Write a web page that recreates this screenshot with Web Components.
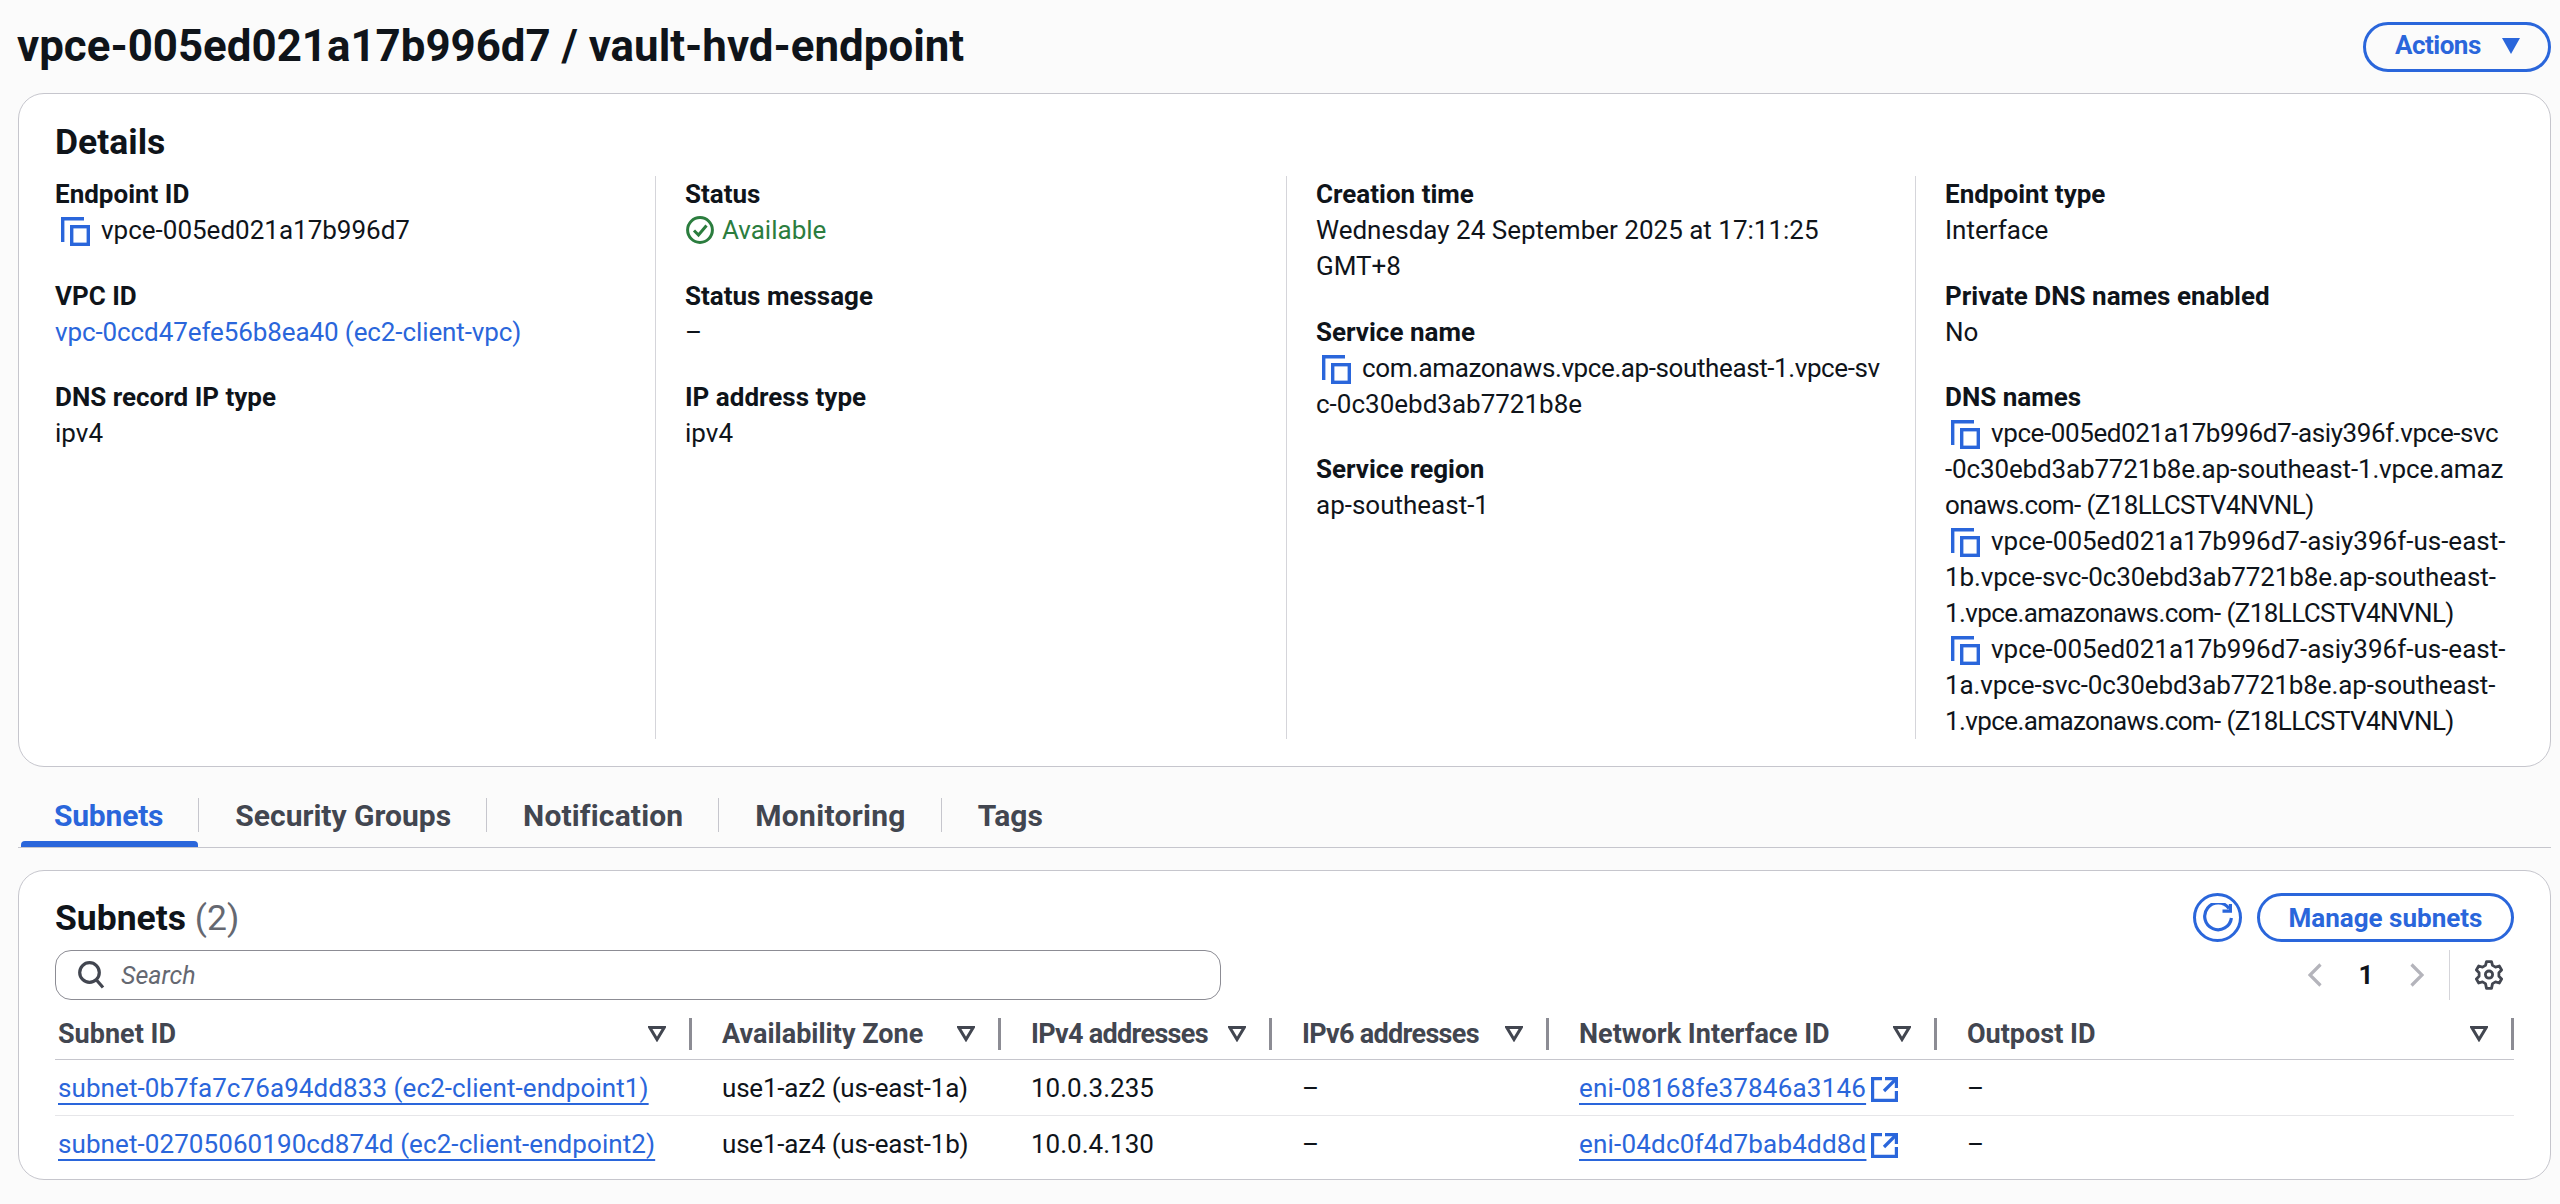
<!DOCTYPE html>
<html lang="en"><head><meta charset="utf-8"><title>vpce</title>
<style>
html,body{margin:0;padding:0;background:#fbfbfb}
body{width:2560px;height:1204px;overflow:hidden;font-family:Roboto,"Liberation Sans",sans-serif;font-size:26px;line-height:36px;color:#0f141a}
</style></head><body>
<vpc-page>
  <page-header>
    <span slot="title">vpce-005ed021a17b996d7 / vault-hvd-endpoint</span>
    <aws-btn slot="actions" caret style="--w:188px">Actions</aws-btn>
  </page-header>
  <aws-card style="--pb:27px;--pt:26px">
    <card-heading>Details</card-heading>
    <detail-grid>
      <detail-col>
        <kv-pair label="Endpoint ID"><aws-icon name="copy"></aws-icon>vpce-005ed021a17b996d7</kv-pair>
        <kv-pair label="VPC ID"><aws-link plain style="letter-spacing:-.1px">vpc-0ccd47efe56b8ea40 (ec2-client-vpc)</aws-link></kv-pair>
        <kv-pair label="DNS record IP type">ipv4</kv-pair>
      </detail-col>
      <detail-col>
        <kv-pair label="Status"><status-ok>Available</status-ok></kv-pair>
        <kv-pair label="Status message">–</kv-pair>
        <kv-pair label="IP address type">ipv4</kv-pair>
      </detail-col>
      <detail-col>
        <kv-pair label="Creation time">Wednesday 24 September 2025 at 17:11:25<br>GMT+8</kv-pair>
        <kv-pair label="Service name"><aws-icon name="copy"></aws-icon><span style="letter-spacing:-.4px">com.amazonaws.vpce.ap-southeast-1.vpce-sv</span><br>c-0c30ebd3ab7721b8e</kv-pair>
        <kv-pair label="Service region">ap-southeast-1</kv-pair>
      </detail-col>
      <detail-col>
        <kv-pair label="Endpoint type">Interface</kv-pair>
        <kv-pair label="Private DNS names enabled">No</kv-pair>
        <kv-pair label="DNS names"><aws-icon name="copy"></aws-icon><span style="letter-spacing:-.4px">vpce-005ed021a17b996d7-asiy396f.vpce-svc</span><br><span style="letter-spacing:-.15px">-0c30ebd3ab7721b8e.ap-southeast-1.vpce.amaz</span><br><span style="letter-spacing:-.6px">onaws.com- (Z18LLCSTV4NVNL)</span><br><aws-icon name="copy"></aws-icon>vpce-005ed021a17b996d7-asiy396f-us-east-<br><span style="letter-spacing:-.1px">1b.vpce-svc-0c30ebd3ab7721b8e.ap-southeast-</span><br><span style="letter-spacing:-.6px">1.vpce.amazonaws.com- (Z18LLCSTV4NVNL)</span><br><aws-icon name="copy"></aws-icon>vpce-005ed021a17b996d7-asiy396f-us-east-<br><span style="letter-spacing:-.1px">1a.vpce-svc-0c30ebd3ab7721b8e.ap-southeast-</span><br><span style="letter-spacing:-.6px">1.vpce.amazonaws.com- (Z18LLCSTV4NVNL)</span></kv-pair>
      </detail-col>
    </detail-grid>
  </aws-card>
  <tab-bar>
    <tab-item active first style="letter-spacing:-.2px">Subnets</tab-item>
    <tab-item>Security Groups</tab-item>
    <tab-item style="letter-spacing:.15px">Notification</tab-item>
    <tab-item style="letter-spacing:.3px">Monitoring</tab-item>
    <tab-item last>Tags</tab-item>
  </tab-bar>
  <aws-card style="--pb:8px;--pt:22px;--mt:22px">
    <table-title count="(2)">Subnets
      <icon-circle slot="actions"><aws-icon name="refresh"></aws-icon></icon-circle>
      <aws-btn slot="actions" style="--w:257px;--h:49px;--jc:center">Manage subnets</aws-btn>
    </table-title>
    <table-tools></table-tools>
    <t-row head>
      <t-head first>Subnet ID</t-head><t-head>Availability Zone</t-head><t-head style="letter-spacing:-.7px">IPv4 addresses</t-head><t-head style="letter-spacing:-.7px">IPv6 addresses</t-head><t-head>Network Interface ID</t-head><t-head>Outpost ID</t-head>
    </t-row>
    <t-row>
      <t-cell first><aws-link style="letter-spacing:.08px">subnet-0b7fa7c76a94dd833 (ec2-client-endpoint1)</aws-link></t-cell><t-cell style="letter-spacing:-.2px">use1-az2 (us-east-1a)</t-cell><t-cell>10.0.3.235</t-cell><t-cell>–</t-cell><t-cell><aws-link style="letter-spacing:.2px">eni-08168fe37846a3146</aws-link><aws-icon name="ext"></aws-icon></t-cell><t-cell>–</t-cell>
    </t-row>
    <t-row last>
      <t-cell first><aws-link style="letter-spacing:.08px">subnet-02705060190cd874d (ec2-client-endpoint2)</aws-link></t-cell><t-cell style="letter-spacing:-.2px">use1-az4 (us-east-1b)</t-cell><t-cell>10.0.4.130</t-cell><t-cell>–</t-cell><t-cell><aws-link style="letter-spacing:.2px">eni-04dc0f4d7bab4dd8d</aws-link><aws-icon name="ext"></aws-icon></t-cell><t-cell>–</t-cell>
    </t-row>
  </aws-card>
</vpc-page>
<script>
const BLUE='#2a66db';
const ICONS={
 copy:`<svg width="29" height="29" viewBox="0 0 29 29" fill="none" stroke="${BLUE}" stroke-width="3.4"><path d="M1.7 25V1.7H23"/><rect x="10.7" y="9.7" width="16.6" height="17.6"/></svg>`,
 ext:`<svg width="27" height="25" viewBox="0 0 27 25" fill="none" stroke="${BLUE}" stroke-width="3.2"><path d="M11 1.6H1.6V23.4H25.4V14"/><path d="M14 1.6H25.4V11" /><path d="M25 2 13 14"/></svg>`,
 refresh:`<svg width="32" height="30" viewBox="0 0 32 30" fill="none" stroke="${BLUE}" stroke-width="3.2"><path d="M27 5.5A13.4 13.4 0 1 0 29.4 15"/><path d="M28.4 1V8.2H20.5"/></svg>`
};
function def(name,html,extra){
  const t=document.createElement('template');t.innerHTML=html;
  customElements.define(name,class extends HTMLElement{
    constructor(){super();this.attachShadow({mode:'open'}).appendChild(t.content.cloneNode(true));}
    connectedCallback(){extra&&extra.call(this,this.shadowRoot);}
  });
}
def('vpc-page',`<style>:host{display:block;box-sizing:border-box;width:2560px;padding:0 9px 0 18px}</style><slot></slot>`);
def('page-header',`<style>:host{display:flex;align-items:center;justify-content:space-between;height:93px;padding-top:0;margin-left:-1px;box-sizing:border-box}
 .t{font:700 43.85px/50px Roboto,sans-serif;color:#0f141a;position:relative;top:-1px}</style>
 <div class="t"><slot name="title"></slot></div><slot name="actions"></slot>`);
def('aws-btn',`<style>:host{display:inline-flex;align-items:center;justify-content:var(--jc,flex-start);box-sizing:border-box;width:var(--w,auto);height:var(--h,50px);border:3px solid ${BLUE};border-radius:26px;background:transparent;color:${BLUE};font:700 26px/30px Roboto,sans-serif;padding:0 0 0 29px;gap:20px}
 :host([caret]){letter-spacing:-.5px;gap:21px;line-height:28px;padding-bottom:3px}
 :host(:not([caret])){padding:0}
 svg{display:block;margin-top:2px}
 </style><slot></slot><span id="c"></span>`,function(s){if(this.hasAttribute('caret'))s.getElementById('c').innerHTML=`<svg width="18" height="16" viewBox="0 0 18 16"><path d="M0 0H18L9 16Z" fill="${BLUE}"/></svg>`;else s.getElementById('c').remove();});
def('aws-card',`<style>:host{display:block;box-sizing:border-box;background:#fff;border:1px solid #c6c6cd;border-radius:26px;padding:var(--pt,26px) 36px var(--pb,28px) 36px;margin-top:var(--mt,0)}</style><slot></slot>`);
def('card-heading',`<style>:host{display:block;font:700 35.5px/44px Roboto,sans-serif;color:#0f141a;margin-bottom:12px}</style><slot></slot>`);
def('detail-grid',`<style>:host{display:grid;grid-template-columns:600px 631px 629px 1fr}</style><slot></slot>`);
def('detail-col',`<style>:host{display:flex;flex-direction:column;gap:29.5px;box-sizing:border-box;padding-left:29px;padding-right:10px;border-left:1.5px solid #d5d5da;white-space:nowrap}
 :host(:first-child){padding-left:0;border-left:0}</style><slot></slot>`);
def('kv-pair',`<style>:host{display:block}.l{font-weight:700;line-height:36px;color:#0f141a}.v{line-height:36px}</style><div class="l"></div><div class="v"><slot></slot></div>`,function(s){s.querySelector('.l').textContent=this.getAttribute('label');});
def('aws-icon',`<style>:host{display:inline-block;vertical-align:-7px;line-height:0}
 :host([name=copy]){margin:0 11px 0 6px}
 :host([name=ext]){margin-left:5px;vertical-align:-5px}
 :host([name=refresh]){vertical-align:0}</style><span id="i"></span>`,function(s){s.getElementById('i').innerHTML=ICONS[this.getAttribute('name')];});
def('aws-link',`<style>:host{color:${BLUE};text-decoration:underline;text-decoration-thickness:2px;text-underline-offset:6px}:host([plain]){text-decoration:none}</style><slot></slot>`);
def('status-ok',`<style>:host{color:#2b7d3e;display:flex;align-items:center;height:36px;gap:8px;margin-left:1px}svg{display:block}</style>
 <svg width="28" height="28" viewBox="0 0 28 28" fill="none" stroke="#2b7d3e" stroke-width="3"><circle cx="14" cy="14" r="12.4"/><path d="M8 14.5 12.5 19 20.5 9.5"/></svg><slot></slot>`);
def('tab-bar',`<style>:host{display:flex;align-items:stretch;height:81px;box-sizing:border-box;border-bottom:1.5px solid #c6c6cd}</style><slot></slot>`);
def('tab-item',`<style>:host{position:relative;display:flex;align-items:flex-end;height:80px;box-sizing:border-box;padding:0 36px 13px;font:700 30px/36px Roboto,sans-serif;color:#424650}
 :host::after{content:"";position:absolute;right:0;top:31px;height:34px;border-right:1.5px solid #c6c6cd}
 :host([last])::after{display:none}
 :host([first]){margin-left:3px;padding-left:33px}
 :host([active]){color:${BLUE}}
 :host([active])::before{content:"";position:absolute;left:0;right:1px;bottom:0;height:6px;background:${BLUE};border-radius:4px 4px 0 0}</style><slot></slot>`);
def('table-title',`<style>:host{display:flex;align-items:center;justify-content:space-between;height:49px}
 .h{font:700 35.5px/44px Roboto,sans-serif}.c{font-weight:400;color:#656871}
 .a{display:flex;gap:15px;align-items:center}</style>
 <div class="h"><slot></slot> <span class="c"></span></div><div class="a"><slot name="actions"></slot></div>`,function(s){s.querySelector('.c').textContent=this.getAttribute('count');});
def('icon-circle',`<style>:host{display:flex;align-items:center;justify-content:center;width:49px;height:49px;box-sizing:border-box;border:3px solid ${BLUE};border-radius:50%}</style><slot></slot>`);
def('table-tools',`<style>:host{display:flex;align-items:center;justify-content:space-between;height:50px;margin:8px 0 9px}
 .s{display:flex;align-items:center;box-sizing:border-box;width:1166px;height:50px;border:1.5px solid #8c8c94;border-radius:16px;background:#fff;padding-left:22px;gap:16px;font:italic 400 25px/30px Roboto,sans-serif;color:#656871}
 .s span{position:relative;top:1px}
 .p{display:flex;align-items:center;height:50px}
 .n{font-weight:700;width:88px;text-align:center}
 .d{width:0;height:50px;border-left:1.5px solid #d5d5da;margin:0 25px 0 25px}
 svg{display:block}.g{margin-right:11px}</style>
 <div class="s"><svg width="27" height="28" viewBox="0 0 27 28" fill="none" stroke="#424650" stroke-width="3.2"><circle cx="11.5" cy="11.5" r="9.8"/><path d="M18.5 19 25 26.5"/></svg><span>Search</span></div>
 <div class="p"><svg width="14" height="24" viewBox="0 0 14 24" fill="none" stroke="#b4b4bb" stroke-width="3.2"><path d="M12.5 1.5 2 12 12.5 22.5"/></svg><span class="n">1</span><svg width="14" height="24" viewBox="0 0 14 24" fill="none" stroke="#b4b4bb" stroke-width="3.2"><path d="M1.5 1.5 12 12 1.5 22.5"/></svg><span class="d"></span>
 <svg class="g" width="28" height="30" viewBox="0 0 28 30" fill="none" stroke="#424650" stroke-width="2.8" stroke-linejoin="round"><path d="M11.5 1.6H16.5L17.5 5.4 20.5 7.1 24.3 6 26.6 10 23.9 12.8V16.2L26.6 19 24.3 23 20.5 21.9 17.5 23.6 16.5 28.4H11.5L10.5 23.6 7.5 21.9 3.7 23 1.4 19 4.1 16.2V12.8L1.4 10 3.7 6 7.5 7.1 10.5 5.4Z"/><circle cx="14" cy="14.6" r="3.6"/></svg></div>`);
def('t-row',`<style>:host{display:grid;grid-template-columns:637px 309px 271px 277px 388px 577px;height:56px;box-sizing:border-box;border-bottom:1.5px solid #e6e6e9;align-items:center}
 :host([head]){height:51px;border-bottom-color:#c6c6cd}
 :host([last]){border-bottom:0;height:55px}</style><slot></slot>`);
def('t-head',`<style>:host{position:relative;display:flex;align-items:center;justify-content:space-between;box-sizing:border-box;height:32px;padding:0 26px 0 30px;font:700 27px/32px Roboto,sans-serif;color:#424650}
 :host([first]){padding-left:3px}
 :host::after{content:"";position:absolute;right:0;top:0;height:32px;border-right:3px solid #8c8c94}
 svg{display:block;flex:none}</style><slot></slot><svg width="18" height="16" viewBox="0 0 18 16" fill="none" stroke="#424650" stroke-width="3"><path d="M1.8 1.5H16.2L9 13.5Z"/></svg>`);
def('t-cell',`<style>:host{display:block;padding-left:30px;white-space:nowrap;line-height:36px}:host([first]){padding-left:3px}</style><slot></slot>`);
</script>
</body></html>
